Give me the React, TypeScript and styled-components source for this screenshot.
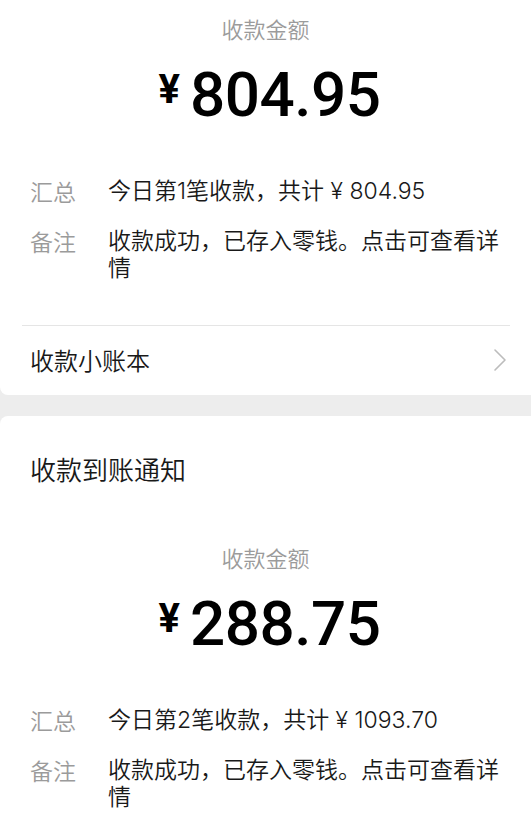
import React from 'react'
import styled, { createGlobalStyle } from 'styled-components'

const GlobalStyle = createGlobalStyle`
  html, body {
    margin: 0;
    padding: 0;
    background: #ededed;
  }
  body {
    font-family: "Noto Sans CJK SC", "Noto Sans", sans-serif;
    font-weight: 350;
    -webkit-font-smoothing: antialiased;
  }
  #root {
    overflow: hidden;
  }
`

const Page = styled.div`
  display: flex;
  flex-direction: column;
  gap: 21px;
  width: 531px;
  min-height: 832px;
  overflow: hidden;
`

const Card = styled.section<{ $cutTop?: boolean }>`
  background: #fff;
  border-radius: ${({ $cutTop }) => ($cutTop ? '0 0 0 8px' : '8px 0 0 0')};
  padding-top: ${({ $cutTop }) => ($cutTop ? '13px' : '35px')};
  ${({ $cutTop }) => (!$cutTop ? 'flex: 1;' : '')}
`

const CardTitle = styled.div`
  padding-left: 30px;
  font-size: 26px;
  line-height: 36px;
  color: #191919;
  margin-bottom: 55px;
`

const AmountLabel = styled.div`
  text-align: center;
  font-size: 22px;
  line-height: 30px;
  color: #9b9b9b;
`

const AmountLine = styled.div`
  display: flex;
  justify-content: center;
  align-items: flex-start;
  gap: 10px;
  margin-top: 21px;
  padding-left: 8px;
  font-family: Roboto, "Liberation Sans", sans-serif;
  color: #000;
`

const Currency = styled.span`
  font-size: 40px;
  line-height: 40px;
  font-weight: 700;
  margin-top: 6px;
`

const Figure = styled.span`
  font-size: 62px;
  line-height: 62px;
  font-weight: 500;
  letter-spacing: -0.5px;
`

const Details = styled.div`
  display: flex;
  flex-direction: column;
  gap: 23px;
  margin-top: 52px;
  padding: 0 22px 0 30px;
`

const DetailRow = styled.div`
  display: flex;
  font-size: 23px;
  line-height: 27px;
`

const DetailLabel = styled.span`
  flex: 0 0 78px;
  color: #9b9b9b;
`

const DetailValue = styled.span`
  flex: 1;
  color: #191919;
  font-family: Inter, "Noto Sans CJK SC", sans-serif;
`

const Divider = styled.div`
  height: 1px;
  background: #e5e5e5;
  margin: 43px 21px 0 22px;
`

const LinkRow = styled.div`
  display: flex;
  align-items: center;
  justify-content: space-between;
  padding: 17px 24px 18px 30px;
  font-size: 24px;
  line-height: 34px;
  color: #191919;
`

const Chevron = () => (
  <svg width="14" height="24" viewBox="0 0 14 24" fill="none">
    <polyline points="2,2 12,12 2,22" stroke="#bcbcbc" strokeWidth="1.6" strokeLinejoin="round" strokeLinecap="round" />
  </svg>
)

type Receipt = { amount: string; count: number; total: string }

const RECEIPTS: Receipt[] = [
  { amount: '804.95', count: 1, total: '804.95' },
  { amount: '288.75', count: 2, total: '1093.70' },
]

function ReceiptBody({ receipt }: { receipt: Receipt }) {
  return (
    <>
      <AmountLabel>收款金额</AmountLabel>
      <AmountLine>
        <Currency>¥</Currency>
        <Figure>{receipt.amount}</Figure>
      </AmountLine>
      <Details>
        <DetailRow>
          <DetailLabel>汇总</DetailLabel>
          <DetailValue>
            今日第{receipt.count}笔收款，共计 ¥ {receipt.total}
          </DetailValue>
        </DetailRow>
        <DetailRow>
          <DetailLabel>备注</DetailLabel>
          <DetailValue>收款成功，已存入零钱。点击可查看详情</DetailValue>
        </DetailRow>
      </Details>
    </>
  )
}

export default function App() {
  return (
    <>
      <GlobalStyle />
      <Page>
        <Card $cutTop>
          <ReceiptBody receipt={RECEIPTS[0]} />
          <Divider />
          <LinkRow>
            <span>收款小账本</span>
            <Chevron />
          </LinkRow>
        </Card>
        <Card>
          <CardTitle>收款到账通知</CardTitle>
          <ReceiptBody receipt={RECEIPTS[1]} />
        </Card>
      </Page>
    </>
  )
}
